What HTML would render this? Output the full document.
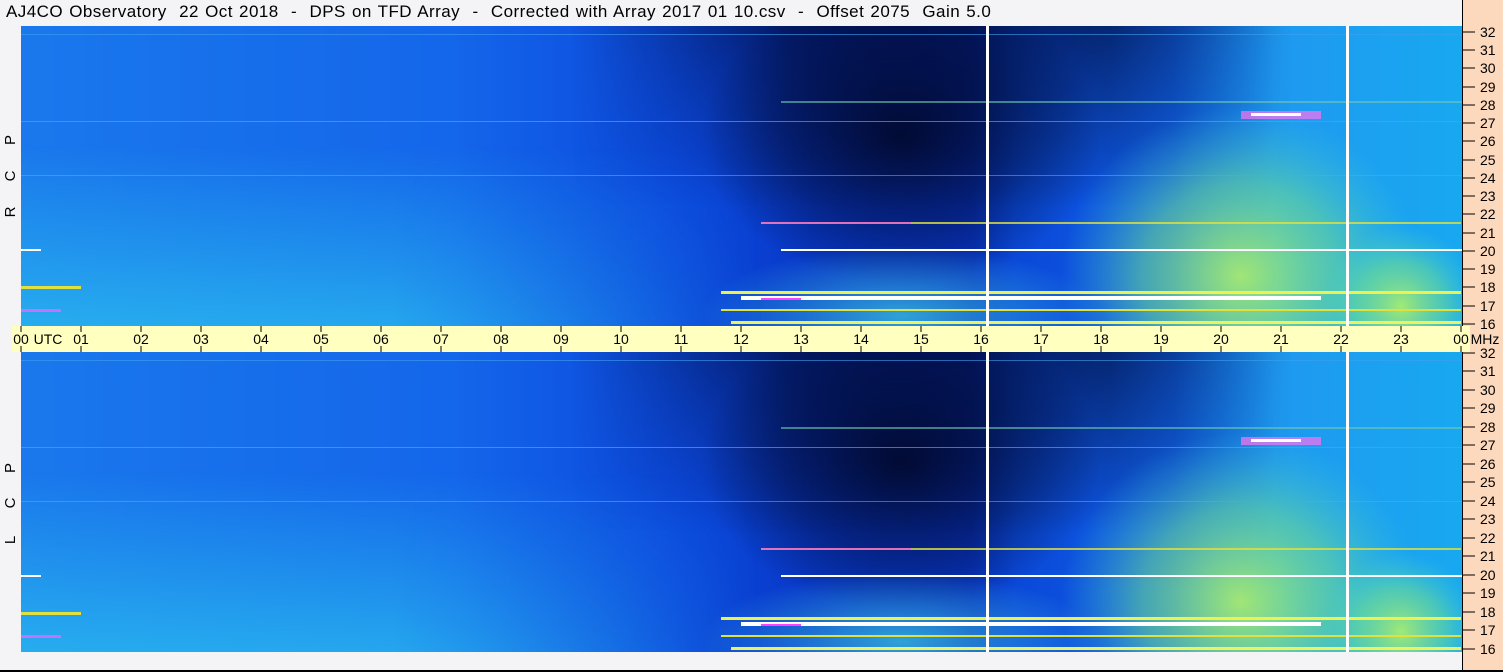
<!DOCTYPE html><html><head><meta charset="utf-8"><style>
html,body{margin:0;width:1503px;height:672px;overflow:hidden}
body{background:#f4f4f6;position:relative;font-family:"Liberation Sans",sans-serif}
.t{position:absolute;left:6px;top:2px;font-size:17px;letter-spacing:0.45px;word-spacing:1px;color:#000;white-space:pre}
.side{position:absolute;left:1462px;top:0;width:41px;height:672px;background:#fcd8bc;border-left:1px solid #000}
</style></head><body>
<div class="t">AJ4CO Observatory  22 Oct 2018  -  DPS on TFD Array  -  Corrected with Array 2017 01 10.csv  -  Offset 2075  Gain 5.0</div>
<div class="side"></div>
<svg width="1503" height="672" style="position:absolute;left:0;top:0">
<defs>
<linearGradient id="h" x1="0" x2="1" y1="0" y2="0">
<stop offset="0" stop-color="#1a78ec"/><stop offset="0.3" stop-color="#1466ea"/><stop offset="0.45" stop-color="#0c4ade"/><stop offset="0.55" stop-color="#0838c8"/><stop offset="0.66" stop-color="#0834c0"/><stop offset="0.69" stop-color="#0a48d8"/><stop offset="0.8" stop-color="#1060e6"/><stop offset="0.87" stop-color="#1e98f0"/><stop offset="0.93" stop-color="#1ca0f0"/><stop offset="1" stop-color="#18a8f0"/>
</linearGradient>
<linearGradient id="lb" x1="0" x2="0" y1="0" y2="1"><stop offset="0.4" stop-color="#30d0f0" stop-opacity="0"/><stop offset="1" stop-color="#30d0f0" stop-opacity="0.6"/></linearGradient>
<linearGradient id="lbh" x1="0" x2="1"><stop offset="0" stop-color="#fff"/><stop offset="0.5" stop-color="#fff"/><stop offset="1" stop-color="#000"/></linearGradient>
<mask id="lm"><rect x="0" y="0" width="740" height="300" fill="url(#lbh)"/></mask>
<linearGradient id="tb" x1="0" x2="0" y1="0" y2="1"><stop offset="0" stop-color="#000018" stop-opacity="0.55"/><stop offset="1" stop-color="#000018" stop-opacity="0"/></linearGradient>
<linearGradient id="tbh" x1="0" x2="1"><stop offset="0" stop-color="#000"/><stop offset="0.3" stop-color="#fff"/><stop offset="0.75" stop-color="#fff"/><stop offset="1" stop-color="#000"/></linearGradient>
<mask id="tm"><rect x="550" y="0" width="720" height="300" fill="url(#tbh)"/></mask>
<radialGradient id="dk" cx="0.5" cy="0.5" r="0.5"><stop offset="0" stop-color="#000010" stop-opacity="0.75"/><stop offset="0.6" stop-color="#000010" stop-opacity="0.35"/><stop offset="1" stop-color="#000010" stop-opacity="0"/></radialGradient>
<radialGradient id="gr" cx="0.5" cy="0.5" r="0.5"><stop offset="0" stop-color="#b0f068" stop-opacity="0.9"/><stop offset="0.55" stop-color="#70e090" stop-opacity="0.55"/><stop offset="1" stop-color="#40d0d0" stop-opacity="0"/></radialGradient>
<radialGradient id="cy" cx="0.5" cy="0.5" r="0.5"><stop offset="0" stop-color="#40d0e0" stop-opacity="0.7"/><stop offset="1" stop-color="#40d0e0" stop-opacity="0"/></radialGradient>
<symbol id="p" viewBox="0 0 1441 300">
<rect x="0" y="0" width="1441" height="300" fill="url(#h)"/>
<rect x="0" y="0" width="740" height="300" fill="url(#lb)" mask="url(#lm)"/>
<rect x="550" y="0" width="720" height="180" fill="url(#tb)" mask="url(#tm)"/>
<ellipse cx="880" cy="110" rx="200" ry="150" fill="url(#dk)"/>
<ellipse cx="1220" cy="250" rx="180" ry="170" fill="url(#gr)"/>
<ellipse cx="880" cy="290" rx="200" ry="70" fill="url(#cy)"/>
<ellipse cx="1380" cy="280" rx="80" ry="80" fill="url(#gr)"/>
<rect x="0" y="8" width="1441" height="1" fill="#40a0f0" opacity=".6"/>
<rect x="0" y="95" width="1441" height="1" fill="#40a8f0" opacity=".7"/>
<rect x="0" y="149" width="1441" height="1" fill="#40b0f0" opacity=".6"/>
<rect x="740" y="196" width="700" height="2" fill="#e0e040" opacity=".8"/>
<rect x="760" y="223" width="690" height="2" fill="#ffffff"/>
<rect x="0" y="223" width="20" height="2" fill="#ffffff"/>
<rect x="700" y="265" width="740" height="3" fill="#f0f050"/>
<rect x="720" y="270" width="580" height="4" fill="#ffffff"/>
<rect x="740" y="272" width="40" height="2" fill="#ff40ff"/>
<rect x="700" y="283" width="740" height="2" fill="#e0e040"/>
<rect x="710" y="295" width="730" height="3" fill="#f0f060"/>
<rect x="760" y="75" width="690" height="2" fill="#70c8b0" opacity=".6"/>
<rect x="1220" y="85" width="80" height="8" fill="#ff70f0" opacity=".7"/>
<rect x="1230" y="87" width="50" height="3" fill="#fff"/>
<rect x="740" y="196" width="150" height="2" fill="#ff40ff" opacity=".6"/>
<rect x="0" y="260" width="60" height="3" fill="#e0e040"/>
<rect x="0" y="283" width="40" height="3" fill="#ff60ff" opacity=".7"/>
<rect x="965" y="0" width="3" height="300" fill="#fff"/>
<rect x="1325" y="0" width="3" height="300" fill="#fff"/>
</symbol>
</defs>
<use href="#p" x="21" y="26" width="1441" height="300"/>
<use href="#p" x="21" y="352" width="1441" height="300"/>
<rect x="12" y="326" width="1458" height="26" fill="#ffffc0"/>
<g font-size="14" text-anchor="middle" fill="#000">
<text x="21" y="344">00</text><text x="48" y="344">UTC</text>
<text x="81" y="344">01</text><text x="141" y="344">02</text><text x="201" y="344">03</text><text x="261" y="344">04</text><text x="321" y="344">05</text><text x="381" y="344">06</text><text x="441" y="344">07</text><text x="501" y="344">08</text><text x="561" y="344">09</text><text x="621" y="344">10</text><text x="681" y="344">11</text><text x="741" y="344">12</text><text x="801" y="344">13</text><text x="861" y="344">14</text><text x="921" y="344">15</text><text x="981" y="344">16</text><text x="1041" y="344">17</text><text x="1101" y="344">18</text><text x="1161" y="344">19</text><text x="1221" y="344">20</text><text x="1281" y="344">21</text><text x="1341" y="344">22</text><text x="1401" y="344">23</text><text x="1461" y="344">00</text><text x="1485" y="344">MHz</text>
</g>
<path d="M21 326v6M81 326v6M141 326v6M201 326v6M261 326v6M321 326v6M381 326v6M441 326v6M501 326v6M561 326v6M621 326v6M681 326v6M741 326v6M801 326v6M861 326v6M921 326v6M981 326v6M1041 326v6M1101 326v6M1161 326v6M1221 326v6M1281 326v6M1341 326v6M1401 326v6M1461 326v6M21 346v6M81 346v6M141 346v6M201 346v6M261 346v6M321 346v6M381 346v6M441 346v6M501 346v6M561 346v6M621 346v6M681 346v6M741 346v6M801 346v6M861 346v6M921 346v6M981 346v6M1041 346v6M1101 346v6M1161 346v6M1221 346v6M1281 346v6M1341 346v6M1401 346v6M1461 346v6" stroke="#000"/>
<g font-size="14" fill="#000">
<text x="1480" y="37">32</text><text x="1480" y="55">31</text><text x="1480" y="73">30</text><text x="1480" y="92">29</text><text x="1480" y="110">28</text><text x="1480" y="128">27</text><text x="1480" y="146">26</text><text x="1480" y="165">25</text><text x="1480" y="183">24</text><text x="1480" y="201">23</text><text x="1480" y="219">22</text><text x="1480" y="238">21</text><text x="1480" y="256">20</text><text x="1480" y="274">19</text><text x="1480" y="292">18</text><text x="1480" y="311">17</text><text x="1480" y="329">16</text>
<text x="1480" y="358">32</text><text x="1480" y="376">31</text><text x="1480" y="395">30</text><text x="1480" y="413">29</text><text x="1480" y="432">28</text><text x="1480" y="450">27</text><text x="1480" y="469">26</text><text x="1480" y="487">25</text><text x="1480" y="506">24</text><text x="1480" y="524">23</text><text x="1480" y="543">22</text><text x="1480" y="561">21</text><text x="1480" y="580">20</text><text x="1480" y="598">19</text><text x="1480" y="617">18</text><text x="1480" y="635">17</text><text x="1480" y="654">16</text>
</g>
<path d="M1463 32h12M1463 50h12M1463 68h12M1463 87h12M1463 105h12M1463 123h12M1463 141h12M1463 160h12M1463 178h12M1463 196h12M1463 214h12M1463 233h12M1463 251h12M1463 269h12M1463 287h12M1463 306h12M1463 324h12M1463 353h12M1463 371h12M1463 390h12M1463 408h12M1463 427h12M1463 445h12M1463 464h12M1463 482h12M1463 501h12M1463 519h12M1463 538h12M1463 556h12M1463 575h12M1463 593h12M1463 612h12M1463 630h12M1463 649h12" stroke="#000"/>
<g font-size="15" fill="#000" text-anchor="middle">
<g transform="translate(15,140) rotate(-90)"><text>P</text></g>
<g transform="translate(15,176) rotate(-90)"><text>C</text></g>
<g transform="translate(15,212) rotate(-90)"><text>R</text></g>
<g transform="translate(15,468) rotate(-90)"><text>P</text></g>
<g transform="translate(15,503) rotate(-90)"><text>C</text></g>
<g transform="translate(15,540) rotate(-90)"><text>L</text></g>
</g>
<rect x="0" y="670" width="1503" height="2" fill="#000"/>
</svg>
</body></html>
